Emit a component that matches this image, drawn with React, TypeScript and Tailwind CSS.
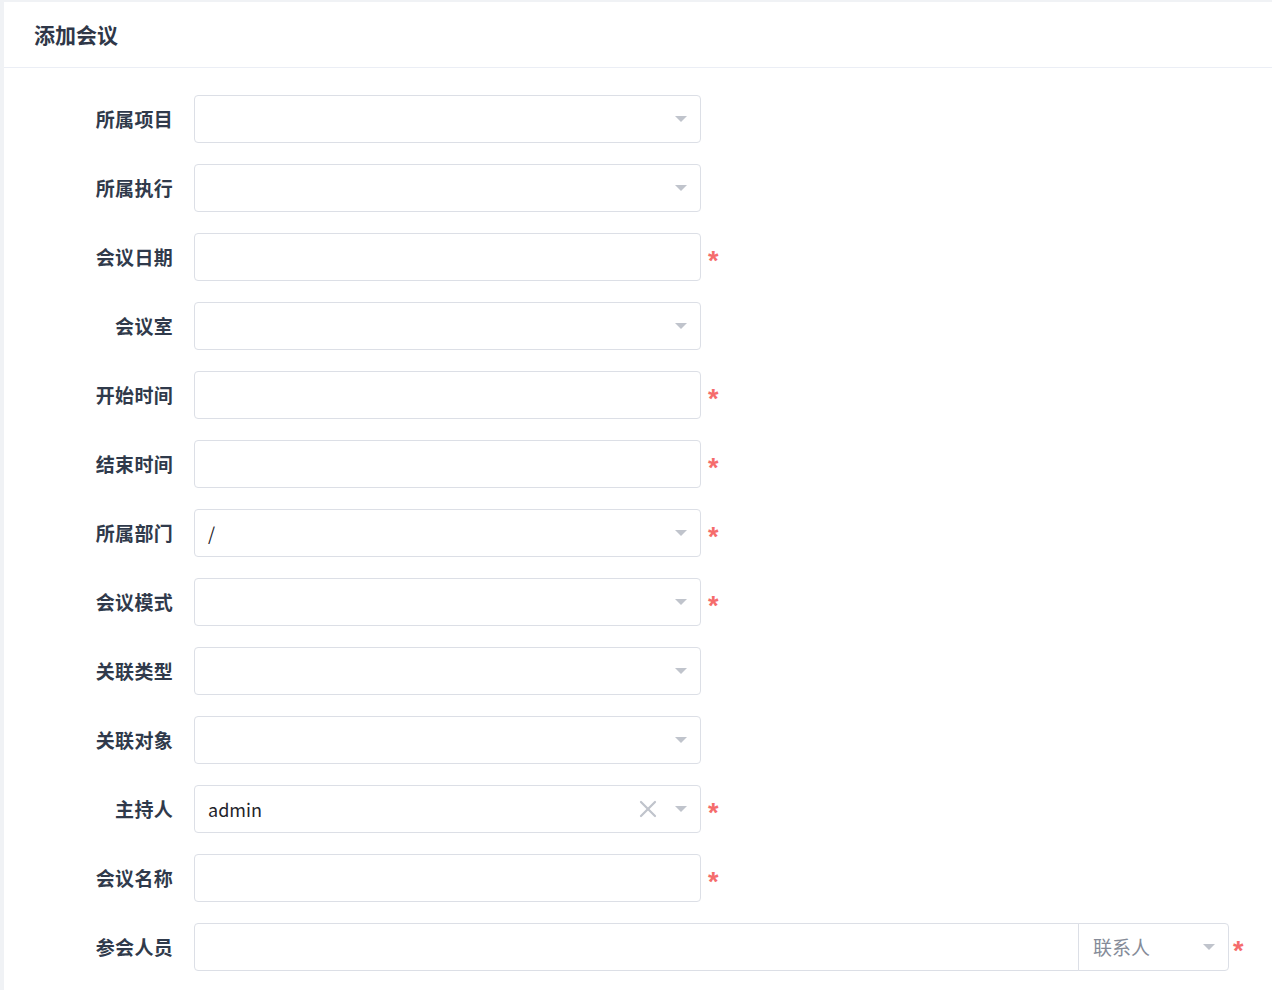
import { X } from 'lucide-react';

type Field = {
  label: string;
  kind: 'select' | 'input';
  value?: string;
  required?: boolean;
  clearable?: boolean;
};

const fields: Field[] = [
  { label: '所属项目', kind: 'select' },
  { label: '所属执行', kind: 'select' },
  { label: '会议日期', kind: 'input', required: true },
  { label: '会议室', kind: 'select' },
  { label: '开始时间', kind: 'input', required: true },
  { label: '结束时间', kind: 'input', required: true },
  { label: '所属部门', kind: 'select', value: '/', required: true },
  { label: '会议模式', kind: 'select', required: true },
  { label: '关联类型', kind: 'select' },
  { label: '关联对象', kind: 'select' },
  { label: '主持人', kind: 'select', value: 'admin', required: true, clearable: true },
  { label: '会议名称', kind: 'input', required: true },
];

const Caret = () => (
  <svg width="12" height="6" viewBox="0 0 12 6" className="shrink-0">
    <path d="M0 0h12L6 6z" fill="#c0c4cc" />
  </svg>
);

// required marker next to the field
const Star = ({ gap }: { gap: string }) => (
  <span
    className={`${gap} text-[27px] leading-none text-[#f56c6c] font-bold translate-y-[4px]`}
    style={{ fontFamily: '"Liberation Sans", Arial, sans-serif' }}
  >
    *
  </span>
);

export default function App() {
  return (
    <div
      className="min-h-screen bg-[#f0f2f5] pl-[4px] pt-[2px] overflow-hidden"
      style={{ fontFamily: '"Noto Sans CJK SC", "Noto Sans", sans-serif' }}
    >
      <div className="bg-white min-h-[988px]">
        <div className="h-[66px] border-b border-[#ebeef5] flex items-center pl-[30px]">
          <h2 className="text-[21px] font-bold text-[#2f3748]">添加会议</h2>
        </div>

        <div className="pt-[27px] pl-[20px] flex flex-col gap-[21px]">
          {fields.map((f) => (
            <div key={f.label} className="flex items-center h-[48px]">
              <label className="w-[150px] pr-[1px] text-right text-[19px] tracking-[0.3px] font-bold text-[#303a4b]">
                {f.label}
              </label>
              <div className="ml-[20px] w-[507px] h-[48px] border border-[#dcdfe6] rounded-[4px] flex items-center px-[13px]">
                <span className="flex-1 text-[18px] text-[#1f2329]">{f.value}</span>
                {f.clearable && <X className="w-[28px] h-[28px] text-[#c0c4cc] mr-[13px]" strokeWidth={1.9} />}
                {f.kind === 'select' && <Caret />}
              </div>
              {f.required && <Star gap="ml-[7px]" />}
            </div>
          ))}

          <div className="flex items-center h-[48px]">
            <label className="w-[150px] pr-[1px] text-right text-[19px] tracking-[0.3px] font-bold text-[#303a4b]">
              参会人员
            </label>
            <div className="ml-[20px] flex h-[48px]">
              <div className="w-[885px] border border-[#dcdfe6] rounded-l-[4px]" />
              <div className="w-[151px] -ml-px border border-[#dcdfe6] rounded-r-[4px] flex items-center pl-[14px] pr-[13px]">
                <span className="flex-1 text-[19px] text-[#858b98]">联系人</span>
                <Caret />
              </div>
            </div>
            <Star gap="ml-[4px]" />
          </div>
        </div>
      </div>
    </div>
  );
}
